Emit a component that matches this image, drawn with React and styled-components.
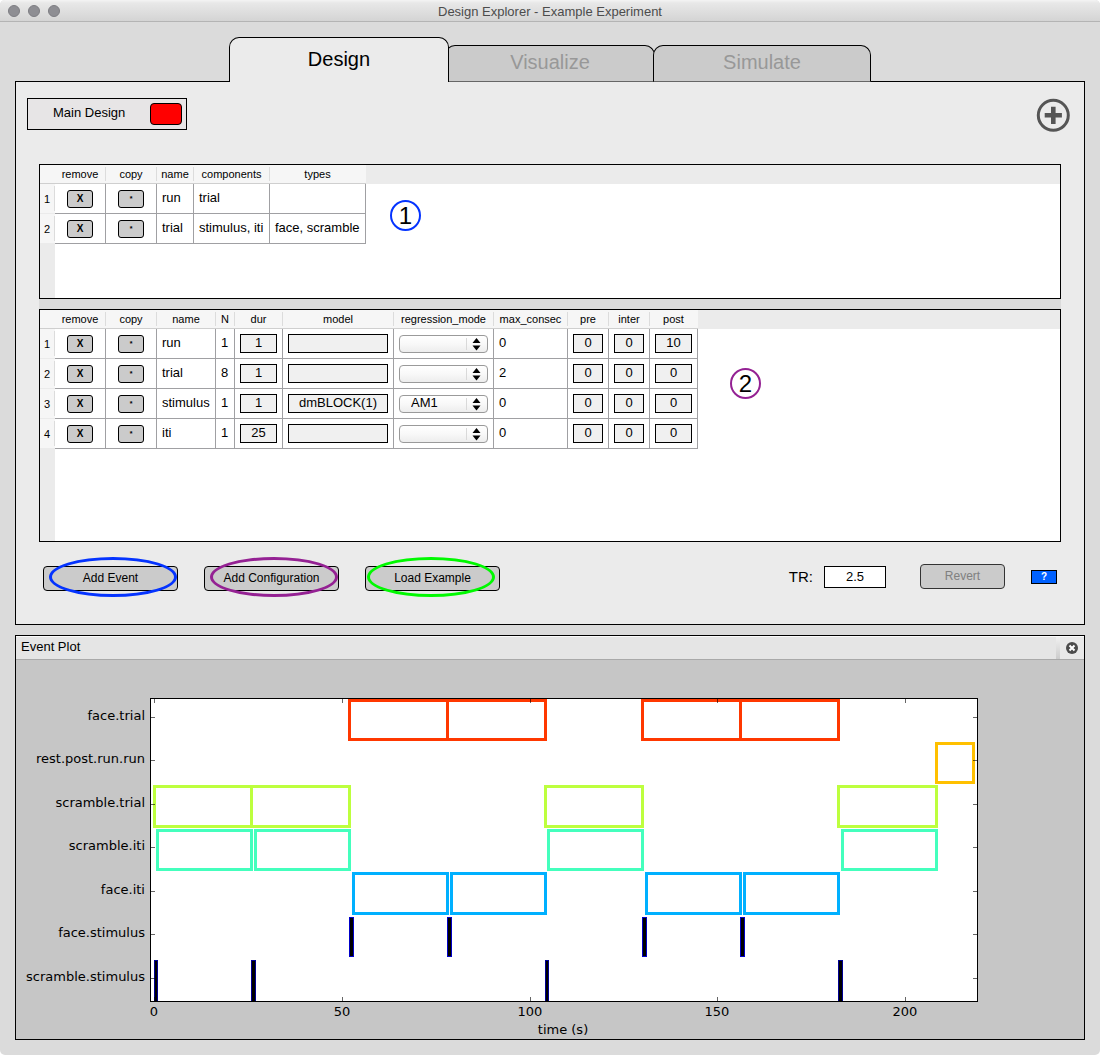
import React, { useState } from "react";
import styled, { createGlobalStyle } from "styled-components";

const GlobalStyle = createGlobalStyle`
  *, *::before, *::after { box-sizing: border-box; }
  body { margin: 0; background: #fff; font-family: "Liberation Sans", Arial, sans-serif; color: #000; }
  button, input, select { font-family: inherit; color: inherit; margin: 0; }
`;

const Window = styled.div`
  display: flex;
  flex-direction: column;
  min-height: 100vh;
  background: #dbdbdb;
  border-radius: 5px;
  overflow: hidden;
`;

const TitleBar = styled.header`
  display: grid;
  grid-template-columns: 1fr auto 1fr;
  align-items: center;
  height: 22px;
  padding: 0 8px;
  border-bottom: 1px solid #b4b4b4;
  background: linear-gradient(#f4f4f4 0, #e8e8e8 3px, #d4d4d4);
`;

const Lights = styled.div`
  display: flex;
  gap: 8px;
`;

const Light = styled.button`
  width: 12px;
  height: 12px;
  padding: 0;
  border: 1px solid #7d7d82;
  border-radius: 50%;
  background: #8e8e93;
`;

const Title = styled.h1`
  margin: 0;
  padding-top: 2px;
  font-size: 13px;
  line-height: 20px;
  font-weight: 400;
  color: #4c4c4c;
`;

const Content = styled.main`
  flex: 1;
  display: flex;
  flex-direction: column;
  padding: 15px;
`;

const Tabs = styled.div`
  display: flex;
  justify-content: center;
  align-items: flex-end;
  position: relative;
  height: 44px;
  z-index: 1;
`;

const Tab = styled.button`
  position: relative;
  z-index: ${(p) => (p.$active ? 2 : 1)};
  width: ${(p) => p.$width}px;
  height: ${(p) => (p.$active ? 45 : 37)}px;
  margin: 0 0 -1px ${(p) => -p.$overlap}px;
  padding: 0 0 ${(p) => (p.$active ? 2 : 4)}px;
  border: 1px solid #000;
  border-bottom: ${(p) => (p.$active ? "0" : "1px solid #666")};
  border-radius: 10px 10px 0 0;
  background: ${(p) => (p.$active ? "#ebebeb" : "#cbcbcb")};
  color: ${(p) => (p.$active ? "#000" : "#989898")};
  font-size: 20px;
  line-height: 24px;
`;

const Panel = styled.section`
  padding: 16px 0 33px;
  border: 1px solid #000;
  background: #ebebeb;
`;

const DesignBar = styled.div`
  display: flex;
  justify-content: space-between;
  align-items: flex-start;
  padding: 0 14px 0 11px;
`;

const DesignItem = styled.div`
  display: flex;
  align-items: center;
  justify-content: space-between;
  width: 160px;
  height: 32px;
  padding: 0 4px 0 25px;
  border: 1px solid #000;
  background: #e7e5e6;
  font-size: 13px;
  line-height: 16px;
`;

const DesignName = styled.span`
  padding-bottom: 2px;
`;

const Swatch = styled.button`
  width: 32px;
  height: 22px;
  border: 1px solid #000;
  border-radius: 4px;
  background: #f00;
`;

const IconButton = styled.button`
  display: flex;
  padding: 0;
  border: 0;
  background: none;
`;

const TableStack = styled.div`
  display: flex;
  flex-direction: column;
  gap: 10px;
  margin: 32px 23px 0;
  background: #dbdbdb;
`;

const TableFrame = styled.div`
  position: relative;
  min-height: ${(p) => p.$height}px;
  border: 1px solid #000;
  background:
    linear-gradient(#ebebeb, #ebebeb) 0 0 / 100% 19px no-repeat,
    linear-gradient(#ebebeb, #ebebeb) 0 0 / 15px 100% no-repeat,
    #fff;
`;

const DataTable = styled.table`
  table-layout: fixed;
  width: ${(p) => p.$width}px;
  border-collapse: separate;
  border-spacing: 0;
  font-size: 13px;
  line-height: 16px;
`;

const Col = styled.col`
  width: ${(p) => p.$width}px;
`;

const HeadCell = styled.th`
  height: 19px;
  padding: 0 1px 0 0;
  border-bottom: 1px solid #cfcfcf;
  background: ${(p) =>
    p.$last
      ? "#f6f6f6"
      : "linear-gradient(#dcdcdc, #dcdcdc) 100% 2px / 1px 14px no-repeat, #f6f6f6"};
  font-size: 11px;
  line-height: 16px;
  font-weight: 400;
  white-space: nowrap;
`;

const RowHead = styled.th`
  padding: 0 1px 0 0;
  background: linear-gradient(#dcdcdc, #dcdcdc) 100% 2px / 1px 25px no-repeat, #f6f6f6;
  border-bottom: 1px solid #ebebeb;
  font-size: 11px;
  font-weight: 400;
  text-align: center;
`;

const Cell = styled.td`
  height: 30px;
  padding: 0 5px 1px;
  border-right: 1px solid #a0a0a3;
  border-bottom: 1px solid #a0a0a3;
  background: #fff;
  white-space: nowrap;
`;

const ControlCell = styled(Cell)`
  padding: 0 5px;
  text-align: center;
`;

const RowButton = styled.button`
  display: block;
  width: 26px;
  height: 18px;
  margin: 1px auto 0;
  padding: 0;
  border: 1px solid #000;
  border-radius: 3px;
  background: #cbcbcb;
  font-size: ${(p) => (p.$small ? 7 : 10)}px;
  line-height: 14px;
  font-weight: 700;
`;

const CellInput = styled.input`
  display: block;
  width: 100%;
  height: 19px;
  padding: 0 0 2px;
  border: 1px solid #000;
  border-radius: 0;
  background: #f0f0f0;
  font-size: 13px;
  line-height: 16px;
  text-align: center;
`;

const SelectBox = styled.span`
  display: grid;
  grid-template-columns: 1fr 22px;
  align-items: center;
  margin-top: 1px;
`;

const SelectField = styled.select`
  grid-area: 1 / 1 / 2 / 3;
  appearance: none;
  width: 100%;
  height: 18px;
  padding: 0 22px 2px 11px;
  border: 1px solid #9a9a9a;
  border-radius: 4px;
  background: linear-gradient(#fff, #f8f8f8 50%, #ededed);
  font-size: 13px;
  line-height: 14px;
`;

const SelectArrows = styled.svg`
  grid-area: 1 / 2 / 2 / 3;
  pointer-events: none;
`;

const Marker = styled.span`
  position: absolute;
  left: ${(p) => p.$x}px;
  top: ${(p) => p.$y}px;
  display: flex;
  align-items: center;
  justify-content: center;
  width: 31px;
  height: 31px;
  border: 2px solid ${(p) => p.$color};
  border-radius: 50%;
  font-size: 24px;
  line-height: 28px;
`;

const Toolbar = styled.div`
  display: flex;
  justify-content: space-between;
  align-items: flex-start;
  padding: 22px 27px 0;
`;

const ActionGroup = styled.div`
  display: flex;
  gap: 26px;
  padding-top: 2px;
`;

const SettingsGroup = styled.div`
  display: flex;
  align-items: center;
`;

const ActionButton = styled.button`
  position: relative;
  width: ${(p) => p.$width}px;
  height: 25px;
  padding: 0 0 1px;
  border: 1px solid #000;
  border-radius: 4px;
  background: #cbcbcb;
  font-size: 12px;
  line-height: 16px;
  &:disabled { color: #808080; border-color: #333; }
`;

const Ring = styled.span`
  position: absolute;
  left: ${(p) => p.$x}px;
  top: -10px;
  width: 128px;
  height: 40px;
  border: 3px solid ${(p) => p.$color};
  border-radius: 50%;
  pointer-events: none;
`;

const TrLabel = styled.label`
  margin-right: 11px;
  font-size: 15px;
  line-height: 18px;
`;

const TrInput = styled.input`
  width: 62px;
  height: 22px;
  margin-right: 34px;
  padding: 0 0 1px;
  border: 1px solid #000;
  border-radius: 0;
  background: #fff;
  font-size: 13px;
  text-align: center;
`;

const HelpButton = styled.button`
  width: 26px;
  height: 14px;
  margin-left: 26px;
  padding: 0;
  border: 1px solid #000;
  background: #0061ff;
  color: #fff;
  font-size: 10px;
  line-height: 12px;
  font-weight: 700;
`;

const PlotPanel = styled.section`
  margin-top: 10px;
  border: 1px solid #000;
  background: #c6c6c6;
`;

const PlotHeader = styled.div`
  display: flex;
  justify-content: space-between;
  height: 24px;
  padding-left: 5px;
  border-top: 1px solid #fafafa;
  border-bottom: 1px solid #a9a9a9;
  background: #e5e5e5;
`;

const PlotTitle = styled.h2`
  margin: 0;
  font-size: 13px;
  line-height: 19px;
  font-weight: 400;
`;

const CloseButton = styled.button`
  width: 28px;
  height: 22px;
  padding: 0 0 0 4px;
  border: 0;
  background: linear-gradient(#f0f0f0, #cccccc) 0 0 / 4px 100% no-repeat, #e9e9e9;
  svg { display: block; margin: 0 auto; }
`;

const Chart = styled.svg`
  display: block;
  width: 100%;
  height: auto;
  font-family: "DejaVu Sans", sans-serif;
  font-size: 13px;
`;

const eventColumns = [
  ["remove", 51],
  ["copy", 51],
  ["name", 37],
  ["components", 76],
  ["types", 96],
];

const eventRows = [
  { name: "run", components: "trial", types: "" },
  { name: "trial", components: "stimulus, iti", types: "face, scramble" },
];

const configColumns = [
  ["remove", 51],
  ["copy", 51],
  ["name", 59],
  ["N", 19],
  ["dur", 48],
  ["model", 111],
  ["regression_mode", 100],
  ["max_consec", 74],
  ["pre", 41],
  ["inter", 41],
  ["post", 48],
];

const configRows = [
  { name: "run", n: 1, dur: "1", model: "", mode: "", max: 0, pre: "0", inter: "0", post: "10" },
  { name: "trial", n: 8, dur: "1", model: "", mode: "", max: 2, pre: "0", inter: "0", post: "0" },
  { name: "stimulus", n: 1, dur: "1", model: "dmBLOCK(1)", mode: "AM1", max: 0, pre: "0", inter: "0", post: "0" },
  { name: "iti", n: 1, dur: "25", model: "", mode: "", max: 0, pre: "0", inter: "0", post: "0" },
];

function Grid({ columns, label, children }) {
  const width = columns.reduce((sum, c) => sum + c[1], 15);
  return (
    <DataTable $width={width} aria-label={label}>
      <colgroup>
        <Col $width={15} />
        {columns.map(([name, w]) => (
          <Col key={name} $width={w} />
        ))}
      </colgroup>
      <thead>
        <tr>
          <HeadCell as="td" $last />
          {columns.map(([name], i) => (
            <HeadCell key={name} scope="col" $last={i === columns.length - 1}>
              {name}
            </HeadCell>
          ))}
        </tr>
      </thead>
      <tbody>{children}</tbody>
    </DataTable>
  );
}

function RowActions({ name }) {
  return (
    <>
      <ControlCell>
        <RowButton type="button" aria-label={`remove ${name}`}>X</RowButton>
      </ControlCell>
      <ControlCell>
        <RowButton type="button" $small aria-label={`copy ${name}`}>*</RowButton>
      </ControlCell>
    </>
  );
}

function InputCell({ label, value }) {
  return (
    <ControlCell>
      <CellInput type="text" aria-label={label} defaultValue={value} />
    </ControlCell>
  );
}

function ModeSelect({ label, value }) {
  return (
    <SelectBox>
      <SelectField aria-label={label} defaultValue={value}>
        <option value=""></option>
        <option value="AM1">AM1</option>
      </SelectField>
      <SelectArrows width="22" height="18" viewBox="0 0 22 18" aria-hidden="true">
        <path d="M.5 3v12" stroke="#d9d9d9" />
        <path d="M6.500 8l4-5 4 5zM6.500 10.500l4 5 4-5z" fill="#000" />
      </SelectArrows>
    </SelectBox>
  );
}

const chartRows = [
  { name: "face.trial", tick: 717, top: 698, bottom: 741, color: "#ff3800", spans: [[348, 449], [446, 547], [641, 742], [739, 840]] },
  { name: "rest.post.run.run", tick: 760, top: 742, bottom: 784, color: "#ffc000", spans: [[935, 975]] },
  { name: "scramble.trial", tick: 804, top: 785, bottom: 828, color: "#bdff3e", spans: [[153, 253], [250, 351], [544, 644], [837, 938]] },
  { name: "scramble.iti", tick: 847, top: 829, bottom: 871, color: "#44ffbd", spans: [[156, 253], [254, 351], [547, 644], [841, 938]] },
  { name: "face.iti", tick: 891, top: 872, bottom: 915, color: "#00b0ff", spans: [[352, 449], [450, 547], [645, 742], [743, 840]] },
  { name: "face.stimulus", tick: 934, top: 917, bottom: 957, color: "#0000c8", solid: true, spans: [[349, 354], [447, 452], [642, 647], [740, 745]] },
  { name: "scramble.stimulus", tick: 978, top: 960, bottom: 1002, color: "#000094", solid: true, spans: [[154, 158], [251, 256], [545, 549], [838, 843]] },
];

const timeTicks = [[0, 154], [50, 342], [100, 530], [150, 717], [200, 905]];

function EventChart() {
  return (
    <Chart viewBox="16 660 1068 379" role="img" aria-label="Event Plot">
      <rect x="150" y="698" width="828" height="304" fill="#fff" />
      {chartRows.map((row) =>
        row.spans.map(([x1, x2]) => {
          const stroke = row.solid ? 1 : 3;
          const top = row.name === "face.trial" ? row.top + 1 : row.top;
          return (
            <rect
              key={`${row.name}-${x1}`}
              x={x1 + stroke / 2}
              y={top + stroke / 2}
              width={x2 - x1 - stroke}
              height={row.bottom - top - stroke}
              fill={row.solid ? "#000" : "#fff"}
              stroke={row.color}
              strokeWidth={stroke}
            />
          );
        })
      )}
      {chartRows.map((row) => (
        <g key={row.name}>
          <path d={`M151 ${row.tick + 0.5}h4M973 ${row.tick + 0.5}h4`} stroke="#000" strokeOpacity=".6" />
          <text x="145" y={row.tick + 3} textAnchor="end">{row.name}</text>
        </g>
      ))}
      {timeTicks.map(([t, x]) => (
        <g key={t}>
          <path d={`M${x + 0.5} 699v4M${x + 0.5} 997v4`} stroke="#000" strokeOpacity=".6" />
          <text x={x} y="1016" textAnchor="middle">{t}</text>
        </g>
      ))}
      <rect x="150.500" y="698.500" width="827" height="303" fill="none" stroke="#000" />
      <text x="563" y="1034" textAnchor="middle">time (s)</text>
    </Chart>
  );
}

const tabs = [
  ["Design", 220, 0],
  ["Visualize", 210, 4],
  ["Simulate", 218, 2],
];

export default function App() {
  const [active, setActive] = useState("Design");
  return (
    <>
      <GlobalStyle />
      <Window>
        <TitleBar>
          <Lights>
            <Light type="button" aria-label="Close" />
            <Light type="button" aria-label="Minimize" />
            <Light type="button" aria-label="Zoom" />
          </Lights>
          <Title>Design Explorer - Example Experiment</Title>
        </TitleBar>
        <Content>
          <Tabs role="tablist">
            {tabs.map(([name, width, overlap]) => (
              <Tab
                key={name}
                type="button"
                role="tab"
                aria-selected={active === name}
                $active={active === name}
                $width={width}
                $overlap={overlap}
                onClick={() => setActive(name)}
              >
                {name}
              </Tab>
            ))}
          </Tabs>

          <Panel>
            <DesignBar>
              <DesignItem>
                <DesignName>Main Design</DesignName>
                <Swatch type="button" aria-label="Main Design color" />
              </DesignItem>
              <IconButton type="button" aria-label="Add design">
                <svg width="34" height="34" viewBox="0 0 34 34" fill="none" stroke="#555">
                  <circle cx="17.300" cy="17.300" r="15" strokeWidth="3" />
                  <path d="M8.700 17.300h17.200M17.300 8.700v17.200" strokeWidth="4.600" />
                </svg>
              </IconButton>
            </DesignBar>

            <TableStack>
              <TableFrame $height={135}>
                <Grid columns={eventColumns} label="Events">
                  {eventRows.map((row, i) => (
                    <tr key={row.name}>
                      <RowHead scope="row">{i + 1}</RowHead>
                      <RowActions name={row.name} />
                      <Cell>{row.name}</Cell>
                      <Cell>{row.components}</Cell>
                      <Cell>{row.types}</Cell>
                    </tr>
                  ))}
                </Grid>
                <Marker $x={350} $y={35} $color="#0433ff">1</Marker>
              </TableFrame>

              <TableFrame $height={233}>
                <Grid columns={configColumns} label="Configurations">
                  {configRows.map((row, i) => (
                    <tr key={row.name}>
                      <RowHead scope="row">{i + 1}</RowHead>
                      <RowActions name={row.name} />
                      <Cell>{row.name}</Cell>
                      <Cell>{row.n}</Cell>
                      <InputCell label={`${row.name} dur`} value={row.dur} />
                      <InputCell label={`${row.name} model`} value={row.model} />
                      <ControlCell>
                        <ModeSelect label={`${row.name} regression_mode`} value={row.mode} />
                      </ControlCell>
                      <Cell>{row.max}</Cell>
                      <InputCell label={`${row.name} pre`} value={row.pre} />
                      <InputCell label={`${row.name} inter`} value={row.inter} />
                      <InputCell label={`${row.name} post`} value={row.post} />
                    </tr>
                  ))}
                </Grid>
                <Marker $x={690} $y={58} $color="#942193">2</Marker>
              </TableFrame>
            </TableStack>

            <Toolbar>
              <ActionGroup>
                <ActionButton type="button" $width={135}>
                  Add Event
                  <Ring $x={5} $color="#0433ff" />
                </ActionButton>
                <ActionButton type="button" $width={135}>
                  Add Configuration
                  <Ring $x={5} $color="#942193" />
                </ActionButton>
                <ActionButton type="button" $width={135}>
                  Load Example
                  <Ring $x={1} $color="#00f900" />
                </ActionButton>
              </ActionGroup>
              <SettingsGroup>
                <TrLabel htmlFor="tr">TR:</TrLabel>
                <TrInput id="tr" type="text" defaultValue="2.5" />
                <ActionButton type="button" disabled $width={85}>Revert</ActionButton>
                <HelpButton type="button" aria-label="Help">?</HelpButton>
              </SettingsGroup>
            </Toolbar>
          </Panel>

          <PlotPanel>
            <PlotHeader>
              <PlotTitle>Event Plot</PlotTitle>
              <CloseButton type="button" aria-label="Close Event Plot">
                <svg width="12" height="12" viewBox="0 0 12 12">
                  <circle cx="6" cy="6" r="6" fill="#4c4c4c" />
                  <path d="M3.500 3.500l5 5M8.500 3.500l-5 5" stroke="#fff" strokeWidth="2" />
                </svg>
              </CloseButton>
            </PlotHeader>
            <EventChart />
          </PlotPanel>
        </Content>
      </Window>
    </>
  );
}
